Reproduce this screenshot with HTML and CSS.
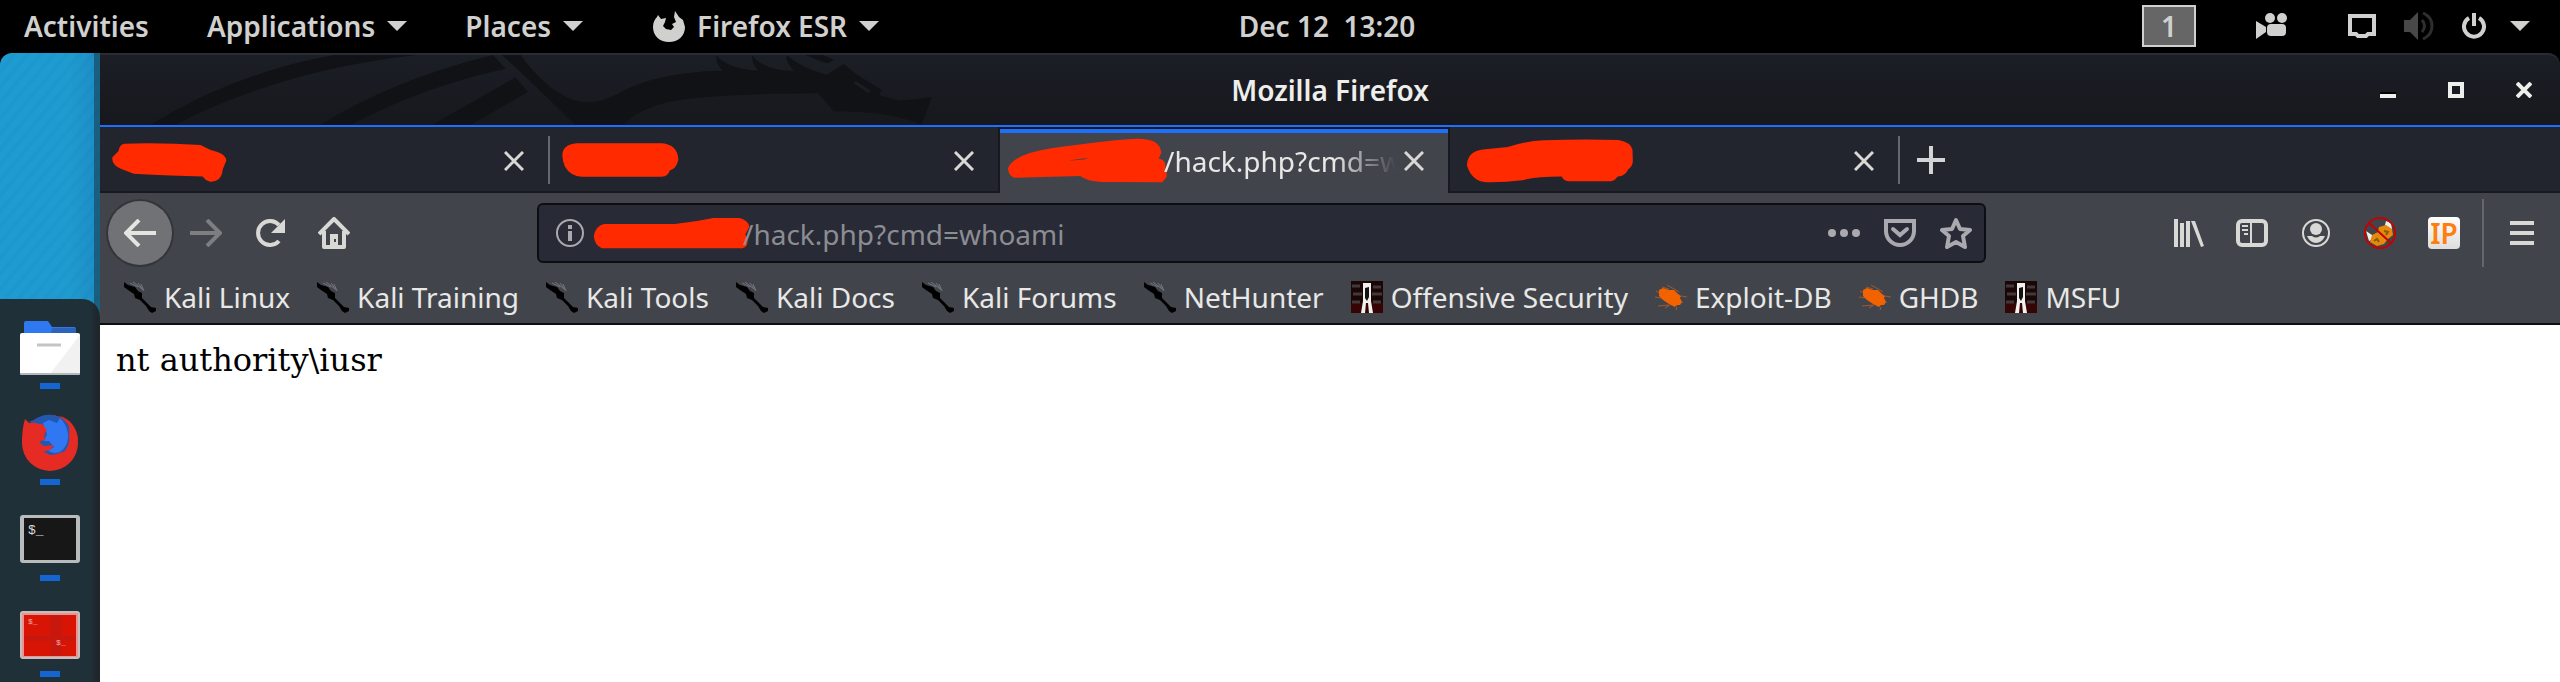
FILE: index.html
```html
<!DOCTYPE html>
<html lang="en">
    <head>
        <meta charset="UTF-8" />
        <meta name="viewport" content="width=device-width, initial-scale=1.0" />
        <title>Mozilla Firefox</title>
        <link rel="stylesheet" href="styles.css">
    </head>
    <body>
        <svg class="defs" width="0" height="0">
            <symbol id="close" viewBox="0 0 20 20">
                <path d="M1 1L19 19M19 1L1 19" fill="none" stroke="currentColor" stroke-width="3" />
            </symbol>
            <symbol id="kali" viewBox="0 0 32 32">
                <path d="M6 2L14 6M9 1L18 8M14 2L19 9M17 3L20 10" fill="none" stroke="#74777c" stroke-width="1" />
                <path d="M0 1L4 4L11 6L14 10L18 12L18 17L22 21L27 26L32 27V30L28 32L25 30L22 25L16 19L11 17L10 13L4 9L0 6Z" fill="#000" />
            </symbol>
            <symbol id="offsec" viewBox="0 0 32 32">
                <path d="M0 0H32V32H0Z" fill="#1b0606" />
                <path d="M0 22H32V32H0Z" fill="#350404" />
                <path d="M1 5H9M2 13H11M1 21H9M22 6H30M21 13H31M22 21H30" stroke="#40383a" stroke-width="3" />
                <path d="M12 2H20V20L22 32H18L17 22H15L14 32H10L12 20Z" fill="#f4f0ee" />
                <path d="M14 7L18 6V16L16 20L14 17Z" fill="#101414" />
            </symbol>
            <symbol id="bug" viewBox="0 0 32 32">
                <path d="M7 6L14 8M12 4L19 8L24 11M1 10L7 13M0 16L6 17M26 15L32 16M3 25L14 24M10 27L15 24M22 26L21 29M25 19L28 22" fill="none" stroke="#a0592c" stroke-width="1" />
                <path d="M4 9L8 7L14 9L19 9L23 13L26 15L25 17L27 21L25 24L22 24L20 26L14 23L8 19L4 15Z" fill="#f26300" />
            </symbol>
        </svg>

        <header class="topbar">
            <nav class="menus">
                <button class="menu">Activities</button>
                <button class="menu">Applications <i class="arrow"></i></button>
                <button class="menu">Places <i class="arrow"></i></button>
                <button class="menu current">
                    <svg class="fox" viewBox="0 0 32 32" width="32" height="32">
                        <path d="M5 5L8 9L13 8L12 12L10 16L13 19L18 20L21 17L19 14L23 12L21 7L22 1L26 7L30 10L32 17C32 26 25 32 16 32S0 26 0 17C0 12 2 9 4 7Z" fill="#d0d0cf" />
                    </svg>
                    Firefox ESR <i class="arrow"></i>
                </button>
            </nav>
            <time class="clock">Dec 12&nbsp; 13:20</time>
            <div class="tray">
                <button class="workspace">1</button>
                <button class="camera" aria-label="Screen recorder">
                    <svg viewBox="0 0 32 26" width="32" height="26">
                        <g fill="#d0d0cf">
                            <circle cx="14" cy="5" r="5" />
                            <circle cx="26" cy="5" r="5" />
                            <rect x="11" y="11" width="19" height="12" rx="4" />
                            <path d="M0 8L10 14V19L0 26Z" />
                        </g>
                    </svg>
                </button>
                <button aria-label="System menu" class="system">
                    <svg viewBox="0 0 28 24" width="28" height="24">
                        <path d="M2 2H26V20H20L18 22H10L8 20H2Z" fill="none" stroke="#d0d0cf" stroke-width="4" />
                    </svg>
                    <svg viewBox="0 0 30 28" width="30" height="28">
                        <path d="M0 8H6L14 0V28L6 20H0Z" fill="#484848" />
                        <path d="M18 8Q23 14 18 20M19 1Q28 5 28 14T19 27" fill="none" stroke="#2e2e2e" stroke-width="3" />
                    </svg>
                    <svg viewBox="0 0 24 26" width="24" height="26">
                        <path d="M7 5A10 10 0 1 0 17 5M12 0V13" fill="none" stroke="#d0d0cf" stroke-width="4" />
                    </svg>
                    <i class="arrow"></i>
                </button>
            </div>
        </header>

        <div class="desktop">
            <aside class="side">
                <nav class="dock">
                    <a class="app" href="#" aria-label="Files">
                        <svg viewBox="0 0 60 60" width="60" height="60">
                            <path d="M4 18V6Q4 4 6 4H28L32 10H54Q56 10 56 12V18Z" fill="#3078f0" />
                            <path d="M32 11H56V18H31Z" fill="#2d62bd" />
                            <rect y="16" width="60" height="42" rx="2" fill="#fff" />
                            <path d="M60 18V57H30Z" fill="#f1f1f1" />
                            <path d="M0 56H60V57Q60 58 58 58H2Q0 58 0 57Z" fill="#b4b8ba" />
                            <path d="M17 28H41" stroke="#c4c4c4" stroke-width="3" />
                        </svg>
                    </a>
                    <a class="app" href="#" aria-label="Firefox">
                        <svg viewBox="0 0 60 60" width="60" height="60">
                            <circle cx="30" cy="30" r="28" fill="#e62b25" />
                            <path d="M8 9L14 7C19 3 26 1 32 2C42 3 50 10 52 20C54 30 48 38 39 41L30 42L22 38L32 36L20 32L18 27L24 25L26 16L16 10Z" fill="#2358b0" />
                            <path d="M23 10L29 7L37 10L40 5C47 12 50 22 47 30C44 37 40 40 34 40L28 38L34 34L29 28H24L27 21L24 14Z" fill="#3078f3" />
                            <path d="M39 3C48 8 50 13 49 19C49 28 50 31 45 38L54 36L58 26C57 15 50 5 39 3Z" fill="#e62b25" />
                            <path d="M5 6L9 10L22 11L27 17L22 23L26 26L19 29L24 33L34 32L30 37L22 39L32 43L42 39L46 46L30 56L10 49L2 30C2 20 3 12 5 6Z" fill="#e62b25" />
                        </svg>
                    </a>
                    <a class="app" href="#" aria-label="Terminal">
                        <svg viewBox="0 0 60 60" width="60" height="60">
                            <rect y="6" width="60" height="48" rx="3" fill="#b9bcbd" />
                            <rect x="4" y="9" width="52" height="42" fill="#171717" />
                            <text class="prompt" x="8" y="25">$_</text>
                        </svg>
                    </a>
                    <a class="app" href="#" aria-label="Terminator">
                        <svg viewBox="0 0 60 60" width="60" height="60">
                            <rect y="6" width="60" height="48" rx="3" fill="#c5bebd" />
                            <rect x="2" y="8" width="56" height="44" fill="#eb9390" />
                            <rect x="4" y="10" width="52" height="41" fill="#d81505" />
                            <path d="M30 10H42V51H30ZM4 31H56V36H4Z" fill="#c21a12" opacity=".7" />
                            <text class="prompt small" x="8" y="19">$_</text>
                            <text class="prompt small" x="36" y="40">$_</text>
                        </svg>
                    </a>
                </nav>
            </aside>

            <main class="window">
                <div class="titlebar">
                    <svg class="dragon" viewBox="163 165 1405 210" preserveAspectRatio="none">
                        <g fill="#111216">
                            <path d="M245 375Q380 220 545 165H680Q460 210 285 375Z" />
                            <path d="M523 375Q640 240 805 165L826 206Q690 260 572 375Z" />
                            <path d="M706 375L842 232L862 276L768 375Z" />
                            <path d="M820 165H850Q900 290 950 306Q975 312 1005 285Q1070 215 1180 212Q1168 190 1170 165Q1185 205 1238 212Q1228 190 1228 165Q1245 210 1297 213Q1284 190 1284 165Q1310 205 1350 224L1378 192L1400 224L1440 270L1436 286L1470 302L1522 292L1505 375Q1460 335 1362 334L1336 280Q1150 282 1090 307Q1040 330 1018 375H940Q870 250 820 165Z" />
                            <path d="M1315 165H1345L1362 181L1350 190Z" />
                        </g>
                        <path d="M1396 246L1420 276" stroke="#1c1d24" stroke-width="7" />
                    </svg>
                    <h1>Mozilla Firefox</h1>
                    <div class="controls">
                        <button aria-label="Minimize"><svg viewBox="0 0 16 16" width="16" height="16"><path d="M0 10H16V12H0Z" fill="#000" /><path d="M0 12H16V16H0Z" fill="#eeeeec" /></svg></button>
                        <button aria-label="Maximize"><svg viewBox="0 0 16 16" width="16" height="16"><path d="M2 2H14V14H2Z" fill="none" stroke="#eeeeec" stroke-width="4" /></svg></button>
                        <button aria-label="Close"><svg viewBox="0 0 16 16" width="16" height="16"><path d="M1 1L15 15M15 1L1 15" fill="none" stroke="#eeeeec" stroke-width="4" /></svg></button>
                    </div>
                </div>

                <div class="tabs">
                    <div class="tab">
                        <svg class="scribble" viewBox="52 60 288 130" preserveAspectRatio="none" width="118" height="43">
                            <path d="M82 71Q180 68 268 75L293 90Q330 100 331 122L322 150Q320 186 291 186Q280 182 273 170Q200 168 105 162L75 148Q50 135 53 112L68 93Q70 74 82 71Z" />
                        </svg>
                        <button class="close" aria-label="Close tab"><svg width="20" height="20"><use href="#close" /></svg></button>
                    </div>
                    <div class="tab line">
                        <svg class="scribble" viewBox="1154 60 300 130" preserveAspectRatio="none" width="122" height="43">
                            <path d="M1195 70H1405Q1444 75 1445 120Q1440 148 1424 152Q1420 170 1404 171H1208Q1180 170 1166 140Q1145 75 1195 70Z" />
                        </svg>
                        <button class="close" aria-label="Close tab"><svg width="20" height="20"><use href="#close" /></svg></button>
                    </div>
                    <div class="tab active">
                        <svg class="scribble" viewBox="78 34 448 145" preserveAspectRatio="none" width="160" height="48">
                            <path d="M95 157Q78 150 78 128Q95 85 200 68Q340 45 440 39Q505 38 507 82L500 99Q522 105 518 125Q524 140 522 155L510 171L340 170Q300 168 280 152ZM247 106L290 102L305 97L262 103Z" fill-rule="evenodd" />
                        </svg>
                        <span class="label">/hack.php?cmd=w</span>
                        <button class="close" aria-label="Close tab"><svg width="20" height="20"><use href="#close" /></svg></button>
                    </div>
                    <div class="tab">
                        <svg class="scribble" viewBox="62 45 484 140" preserveAspectRatio="none" width="173" height="47">
                            <path d="M130 177Q90 175 76 128Q76 85 120 79L190 72Q240 54 290 52Q400 47 500 51Q535 58 539 80L540 115Q538 132 527 138Q520 158 498 160Q490 172 480 174H360Q345 172 341 160Q270 160 230 171Q180 178 130 177Z" />
                        </svg>
                        <button class="close" aria-label="Close tab"><svg width="20" height="20"><use href="#close" /></svg></button>
                    </div>
                    <button class="newtab" aria-label="New tab">
                        <svg viewBox="0 0 28 28" width="28" height="28"><path d="M14 0V28M0 14H28" stroke="#d4d4d4" stroke-width="4" /></svg>
                    </button>
                </div>

                <div class="toolbar">
                    <div class="buttons">
                        <button class="back" aria-label="Back"><svg viewBox="0 0 32 28" width="32" height="28"><path d="M15 1L2 14L15 27M2 14H32" fill="none" stroke="#e4e4e1" stroke-width="4" /></svg></button>
                        <button class="forward" aria-label="Forward"><svg viewBox="0 0 32 28" width="32" height="28"><path d="M17 1L30 14L17 27M30 14H0" fill="none" stroke="#7d7e82" stroke-width="4" /></svg></button>
                        <button aria-label="Reload"><svg viewBox="0 0 32 28" width="32" height="28"><path d="M25 22A12 12 0 1 1 25 6" fill="none" stroke="#d8d8d5" stroke-width="4" /><path d="M31 0V14H17Z" fill="#d8d8d5" /></svg></button>
                        <button aria-label="Home"><svg viewBox="0 0 32 32" width="32" height="32"><path d="M1 17L16 2L31 17M6 14V30H26V14" fill="none" stroke="#d8d8d5" stroke-width="4" stroke-linejoin="round" /><path d="M12 17H20V31H12Z" fill="#d8d8d5" /><path d="M16 22H18V25H16Z" fill="#42444c" /></svg></button>
                    </div>
                    <div class="urlbar">
                        <svg viewBox="0 0 28 28" width="28" height="28">
                            <circle cx="14" cy="14" r="13" fill="none" stroke="#a9a9af" stroke-width="2" />
                            <path d="M14 6V10M14 12V22" stroke="#a9a9af" stroke-width="4" />
                        </svg>
                        <svg class="scribble" viewBox="228 45 390 100" preserveAspectRatio="none" width="158" height="33">
                            <path d="M255 66H430Q480 60 525 48H590Q612 55 614 75L604 98Q612 115 608 130Q602 141 592 140H250Q232 130 230 103Q234 72 255 66Z" />
                        </svg>
                        <input type="text" aria-label="Address" value="/hack.php?cmd=whoami">
                        <button aria-label="Page actions"><svg viewBox="0 0 32 32" width="32" height="32"><g fill="#a9a9af"><circle cx="4" cy="16" r="4" /><circle cx="16" cy="16" r="4" /><circle cx="28" cy="16" r="4" /></g></svg></button>
                        <button aria-label="Save to Pocket"><svg viewBox="0 0 32 32" width="32" height="32"><path d="M2 4H30V14A14 14 0 0 1 2 14Z" fill="none" stroke="#a9a9af" stroke-width="4" /><path d="M9 12L16 18L23 12" fill="none" stroke="#a9a9af" stroke-width="4" stroke-linecap="round" /></svg></button>
                        <button aria-label="Bookmark this page"><svg viewBox="0 0 32 32" width="32" height="32"><path d="M16 3L20 12L30 13L23 19L25 30L16 25L7 30L9 19L2 13L12 12Z" fill="none" stroke="#a9a9af" stroke-width="4" stroke-linejoin="round" /></svg></button>
                    </div>
                    <div class="extras">
                        <button aria-label="Library"><svg viewBox="0 0 32 32" width="32" height="32"><path d="M2 2H6V30H2ZM8 6H12V30H8ZM14 4H18V30H14ZM19 4H23L32 29L29 30Z" fill="#d8d8d5" /></svg></button>
                        <button aria-label="Sidebars"><svg viewBox="0 0 32 32" width="32" height="32"><rect x="2" y="4" width="28" height="24" rx="4" fill="none" stroke="#d8d8d5" stroke-width="4" /><path d="M15 4V28M6 9H12M6 13H12M8 17H12" stroke="#d8d8d5" stroke-width="2" /></svg></button>
                        <button aria-label="Account"><svg viewBox="0 0 32 32" width="32" height="32"><circle cx="16" cy="16" r="13" fill="none" stroke="#d8d8d5" stroke-width="2" /><circle cx="16" cy="12" r="6" fill="#d8d8d5" /><path d="M7 19H12Q16 22 20 19H25Q22 26 16 26T7 19Z" fill="#d8d8d5" /></svg></button>
                        <button aria-label="Cookies blocked">
                            <svg viewBox="0 0 32 32" width="32" height="32">
                                <path d="M22 4L27 6L28 12L20 12ZM2 14L8 18L9 22L5 24Z" fill="#eee" />
                                <path d="M6 25L8 18L14 15L15 10L22 8L28 12L29 18L24 22L20 27L13 29Z" fill="#e58a0a" />
                                <path d="M10 24L13 22L15 25M20 14L24 15L22 18" fill="none" stroke="#8a5a12" stroke-width="2" />
                                <circle cx="16" cy="16" r="15" fill="none" stroke="#c00303" stroke-width="2" />
                                <path d="M5 6L27 26" stroke="#c00303" stroke-width="2" />
                            </svg>
                        </button>
                        <button class="ip">IP</button>
                    </div>
                    <button class="hamburger" aria-label="Open menu"><svg viewBox="0 0 24 24" width="24" height="24"><path d="M0 2H24M0 12H24M0 22H24" stroke="#d8d8d5" stroke-width="4" /></svg></button>
                </div>

                <nav class="bookmarks">
                    <a href="#"><svg width="32" height="32"><use href="#kali" /></svg>Kali Linux</a>
                    <a href="#"><svg width="32" height="32"><use href="#kali" /></svg>Kali Training</a>
                    <a href="#"><svg width="32" height="32"><use href="#kali" /></svg>Kali Tools</a>
                    <a href="#"><svg width="32" height="32"><use href="#kali" /></svg>Kali Docs</a>
                    <a href="#"><svg width="32" height="32"><use href="#kali" /></svg>Kali Forums</a>
                    <a href="#"><svg width="32" height="32"><use href="#kali" /></svg>NetHunter</a>
                    <a href="#"><svg width="32" height="32"><use href="#offsec" /></svg>Offensive Security</a>
                    <a href="#"><svg width="32" height="32"><use href="#bug" /></svg>Exploit-DB</a>
                    <a href="#"><svg width="32" height="32"><use href="#bug" /></svg>GHDB</a>
                    <a href="#"><svg width="32" height="32"><use href="#offsec" /></svg>MSFU</a>
                </nav>

                <div class="page">nt authority\iusr</div>
            </main>
        </div>
    </body>
</html>
```
FILE: styles.css
```css
* {
    margin: 0px;
    padding: 0px;
    box-sizing: border-box;
}
body {
    display: flex;
    flex-direction: column;
    height: 100vh;
    overflow: hidden;
    background-color: #000;
    font-family: "Noto Sans", sans-serif;
    font-size: 28px;
    line-height: 36px;
}
svg {
    display: block;
    flex: none;
}
.defs {
    position: absolute;
}
button {
    display: flex;
    align-items: center;
    justify-content: center;
    border: none;
    background: none;
    color: inherit;
    font: inherit;
}
a {
    color: inherit;
    text-decoration: none;
}

/* top panel */
.topbar {
    display: grid;
    grid-template-columns: 1fr auto 1fr;
    align-items: center;
    height: 53px;
    flex: none;
    padding: 0px 30px 2px 24px;
    color: #d0d0cf;
    font-weight: 600;
}
.menus {
    display: flex;
    gap: 58px;
}
.menu {
    gap: 12px;
}
.current {
    margin-left: 12px;
}
.arrow {
    border: 10px solid transparent;
    border-top-color: #d0d0cf;
    border-bottom: none;
}
.clock {
    padding-left: 100px;
}
.tray {
    display: flex;
    align-items: center;
    justify-content: flex-end;
}
.workspace {
    width: 54px;
    height: 42px;
    border: 2px solid #d0d0cf;
    background-color: #666;
}
.camera {
    margin: 0px 60px;
}
.system {
    gap: 28px;
}
.system .arrow {
    margin-left: -4px;
}

/* left side */
.desktop {
    display: flex;
    flex: 1;
    min-height: 0px;
}
.side {
    width: 100px;
    padding-top: 246px;
    border-top-left-radius: 12px;
    background:
        repeating-linear-gradient(130deg, rgba(0, 60, 120, 0.04) 0px 4px, transparent 4px 10px),
        linear-gradient(90deg, #1e9bd0 70px, #1d8fc6 94px, #185f80 94px);
}
.dock {
    padding-top: 18px;
    height: 100%;
    border-top-right-radius: 18px;
    background: linear-gradient(90deg, #203038 90px, #20272c 96px);
}
.app {
    display: flex;
    flex-direction: column;
    align-items: center;
    gap: 6px;
    margin-bottom: 24px;
}
.app::after {
    content: "";
    width: 20px;
    height: 6px;
    background-color: #1464d2;
}
.prompt {
    font: 13px "Liberation Mono", monospace;
    fill: #ddd;
}
.small {
    font-size: 8px;
    fill: #f3aaa5;
}

/* window */
.window {
    display: flex;
    flex-direction: column;
    flex: 1;
    min-width: 0px;
}
.titlebar {
    display: grid;
    grid-template-columns: 1fr auto 1fr;
    align-items: center;
    position: relative;
    height: 74px;
    flex: none;
    border-top: 2px solid #292c36;
    border-bottom: 2px solid #1d70fb;
    border-top-right-radius: 12px;
    background: linear-gradient(#1c1e26, #17181d);
    color: #eeeeec;
}
.dragon {
    position: absolute;
    left: 0px;
    top: 0px;
    width: 860px;
    height: 70px;
}
.titlebar h1 {
    grid-column: 2;
    font-size: 28px;
    font-weight: 600;
}
.controls {
    display: flex;
    justify-content: flex-end;
    gap: 52px;
    padding-right: 28px;
}
.tabs {
    display: flex;
    height: 66px;
    flex: none;
    background-color: #23252e;
    box-shadow: inset 0px -2px #18191e;
    color: #d8d8d5;
}
.tab {
    display: flex;
    align-items: center;
    width: 448px;
    padding: 2px 24px 0px 12px;
}
.line {
    width: 450px;
    background: linear-gradient(#66676b, #66676b) left center / 2px 48px no-repeat;
}
.active {
    width: 452px;
    border: 2px solid #18191e;
    border-width: 2px 2px 0px;
    padding: 0px 24px 0px 8px;
    background: linear-gradient(#1d70fb 4px, #42444c 4px);
}
.scribble {
    fill: #ff2a00;
}
.label {
    flex: 1;
    min-width: 0px;
    margin-left: -4px;
    white-space: nowrap;
    color: #e8e8e6;
    -webkit-mask-image: linear-gradient(90deg, #000 170px, transparent 232px);
    mask-image: linear-gradient(90deg, #000 170px, transparent 232px);
}
.close {
    margin-left: auto;
}
.newtab {
    width: 66px;
    background: linear-gradient(#66676b, #66676b) left center / 2px 48px no-repeat;
}
.toolbar {
    display: flex;
    align-items: center;
    height: 80px;
    flex: none;
    padding: 0px 26px 0px 8px;
    background-color: #42444c;
}
.buttons {
    display: flex;
    align-items: center;
    gap: 32px;
    width: 429px;
}
.back {
    width: 64px;
    height: 64px;
    border-radius: 50%;
    background-color: #717276;
    box-shadow: 0px 0px 0px 2px #34353a;
}
.buttons .forward {
    margin-left: -14px;
}
.urlbar {
    display: flex;
    align-items: center;
    flex: 1;
    height: 60px;
    padding: 0px 12px 0px 17px;
    border: 2px solid #0d0e11;
    border-radius: 6px;
    background-color: #282a35;
}
.urlbar .scribble {
    margin-left: 9px;
}
.urlbar input {
    flex: 1;
    min-width: 0px;
    margin-left: -8px;
    padding-top: 2px;
    border: none;
    outline: none;
    background: none;
    color: #8c8d93;
    font: inherit;
}
.urlbar button {
    margin-left: 24px;
}
.extras {
    display: flex;
    gap: 32px;
    margin-left: 186px;
}
.ip {
    width: 32px;
    height: 32px;
    border-radius: 4px;
    background: linear-gradient(#fff, #ddd);
    color: #ff7f0e;
    font: 600 28px/32px "Noto Sans", sans-serif;
}
.hamburger {
    height: 68px;
    margin-left: 22px;
    padding-left: 26px;
    border-left: 2px solid #66676b;
}
.bookmarks {
    display: flex;
    gap: 27px;
    height: 52px;
    flex: none;
    padding: 0px 24px;
    border-bottom: 2px solid #0d0e11;
    background-color: #42444c;
    color: #e8e8e6;
    white-space: nowrap;
}
.bookmarks a {
    display: flex;
    align-items: center;
    gap: 8px;
    height: 48px;
}
.page {
    flex: 1;
    padding: 16px;
    background-color: #fff;
    color: #000;
    font: 32px/38px "DejaVu Serif", serif;
}
```
